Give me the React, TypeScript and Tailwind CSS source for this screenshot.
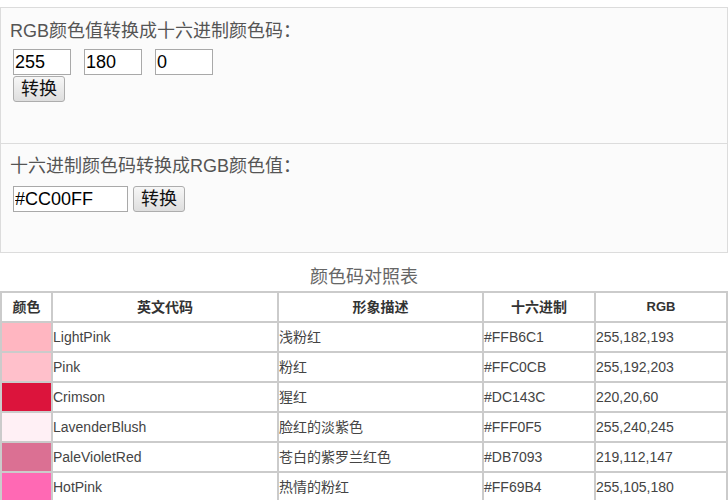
import React from 'react';

const FONT = '"Liberation Sans", "Noto Sans CJK SC", sans-serif';

const rows: { name: string; desc: string; hex: string; rgb: string }[] = [
  { name: 'LightPink', desc: '浅粉红', hex: '#FFB6C1', rgb: '255,182,193' },
  { name: 'Pink', desc: '粉红', hex: '#FFC0CB', rgb: '255,192,203' },
  { name: 'Crimson', desc: '猩红', hex: '#DC143C', rgb: '220,20,60' },
  { name: 'LavenderBlush', desc: '脸红的淡紫色', hex: '#FFF0F5', rgb: '255,240,245' },
  { name: 'PaleVioletRed', desc: '苍白的紫罗兰红色', hex: '#DB7093', rgb: '219,112,147' },
  { name: 'HotPink', desc: '热情的粉红', hex: '#FF69B4', rgb: '255,105,180' },
];

function ConvertButton() {
  return (
    <button className="h-[26px] w-[52px] rounded-[3px] border border-[#adadad] bg-gradient-to-b from-[#f7f7f7] to-[#dedede] text-[18px] leading-none text-[#111]">
      转换
    </button>
  );
}

export default function App() {
  return (
    <div className="bg-white pt-[7px] text-[#555]" style={{ fontFamily: FONT }}>
      {/* converter panels */}
      <div className="border border-[#dcdcdc] bg-[#fbfbfb]">
        <div className="h-[136px] border-b border-[#dcdcdc] pl-[9px] pt-[11px]">
          <p className="text-[18px] leading-[24px]">RGB颜色值转换成十六进制颜色码：</p>
          <div className="mt-[6px] pl-[3px]">
            <div className="flex gap-[13px]">
              <input defaultValue="255" className="h-[26px] w-[58px] border border-[#a9a9a9] bg-white px-[1px] text-[18px] text-black outline-none" />
              <input defaultValue="180" className="h-[26px] w-[58px] border border-[#a9a9a9] bg-white px-[1px] text-[18px] text-black outline-none" />
              <input defaultValue="0" className="h-[26px] w-[58px] border border-[#a9a9a9] bg-white px-[1px] text-[18px] text-black outline-none" />
            </div>
            <div className="mt-px">
              <ConvertButton />
            </div>
          </div>
        </div>
        <div className="h-[108px] pl-[9px] pt-[10px]">
          <p className="text-[18px] leading-[24px]">十六进制颜色码转换成RGB颜色值：</p>
          <div className="mt-[8px] flex gap-[5px] pl-[3px]">
            <input defaultValue="#CC00FF" className="h-[26px] w-[115px] border border-[#a9a9a9] bg-white px-[1px] text-[18px] text-black outline-none" />
            <ConvertButton />
          </div>
        </div>
      </div>

      {/* color table */}
      <p className="mt-[12px] text-center text-[18px] leading-[24px] text-[#666]">颜色码对照表</p>
      <table className="mt-[2px] w-full table-fixed border-collapse text-[14px] text-[#444]">
        <colgroup>
          <col className="w-[51px]" />
          <col className="w-[226px]" />
          <col className="w-[205px]" />
          <col className="w-[112px]" />
          <col />
        </colgroup>
        <thead>
          <tr className="h-[30px] font-bold text-[#333]">
            <th className="border-2 border-[#cbcbcb] p-0">颜色</th>
            <th className="border-2 border-[#cbcbcb] p-0">英文代码</th>
            <th className="border-2 border-[#cbcbcb] p-0">形象描述</th>
            <th className="border-2 border-[#cbcbcb] p-0">十六进制</th>
            <th className="border-2 border-[#cbcbcb] p-0 text-[13px]">RGB</th>
          </tr>
        </thead>
        <tbody>
          {rows.map((r) => (
            <tr key={r.name} className="h-[30px]">
              <td className="border-2 border-[#cbcbcb] p-0" style={{ backgroundColor: r.hex }} />
              <td className="border-2 border-[#cbcbcb] p-0">{r.name}</td>
              <td className="border-2 border-[#cbcbcb] p-0">{r.desc}</td>
              <td className="border-2 border-[#cbcbcb] p-0">{r.hex}</td>
              <td className="border-2 border-[#cbcbcb] p-0">{r.rgb}</td>
            </tr>
          ))}
        </tbody>
      </table>
    </div>
  );
}
